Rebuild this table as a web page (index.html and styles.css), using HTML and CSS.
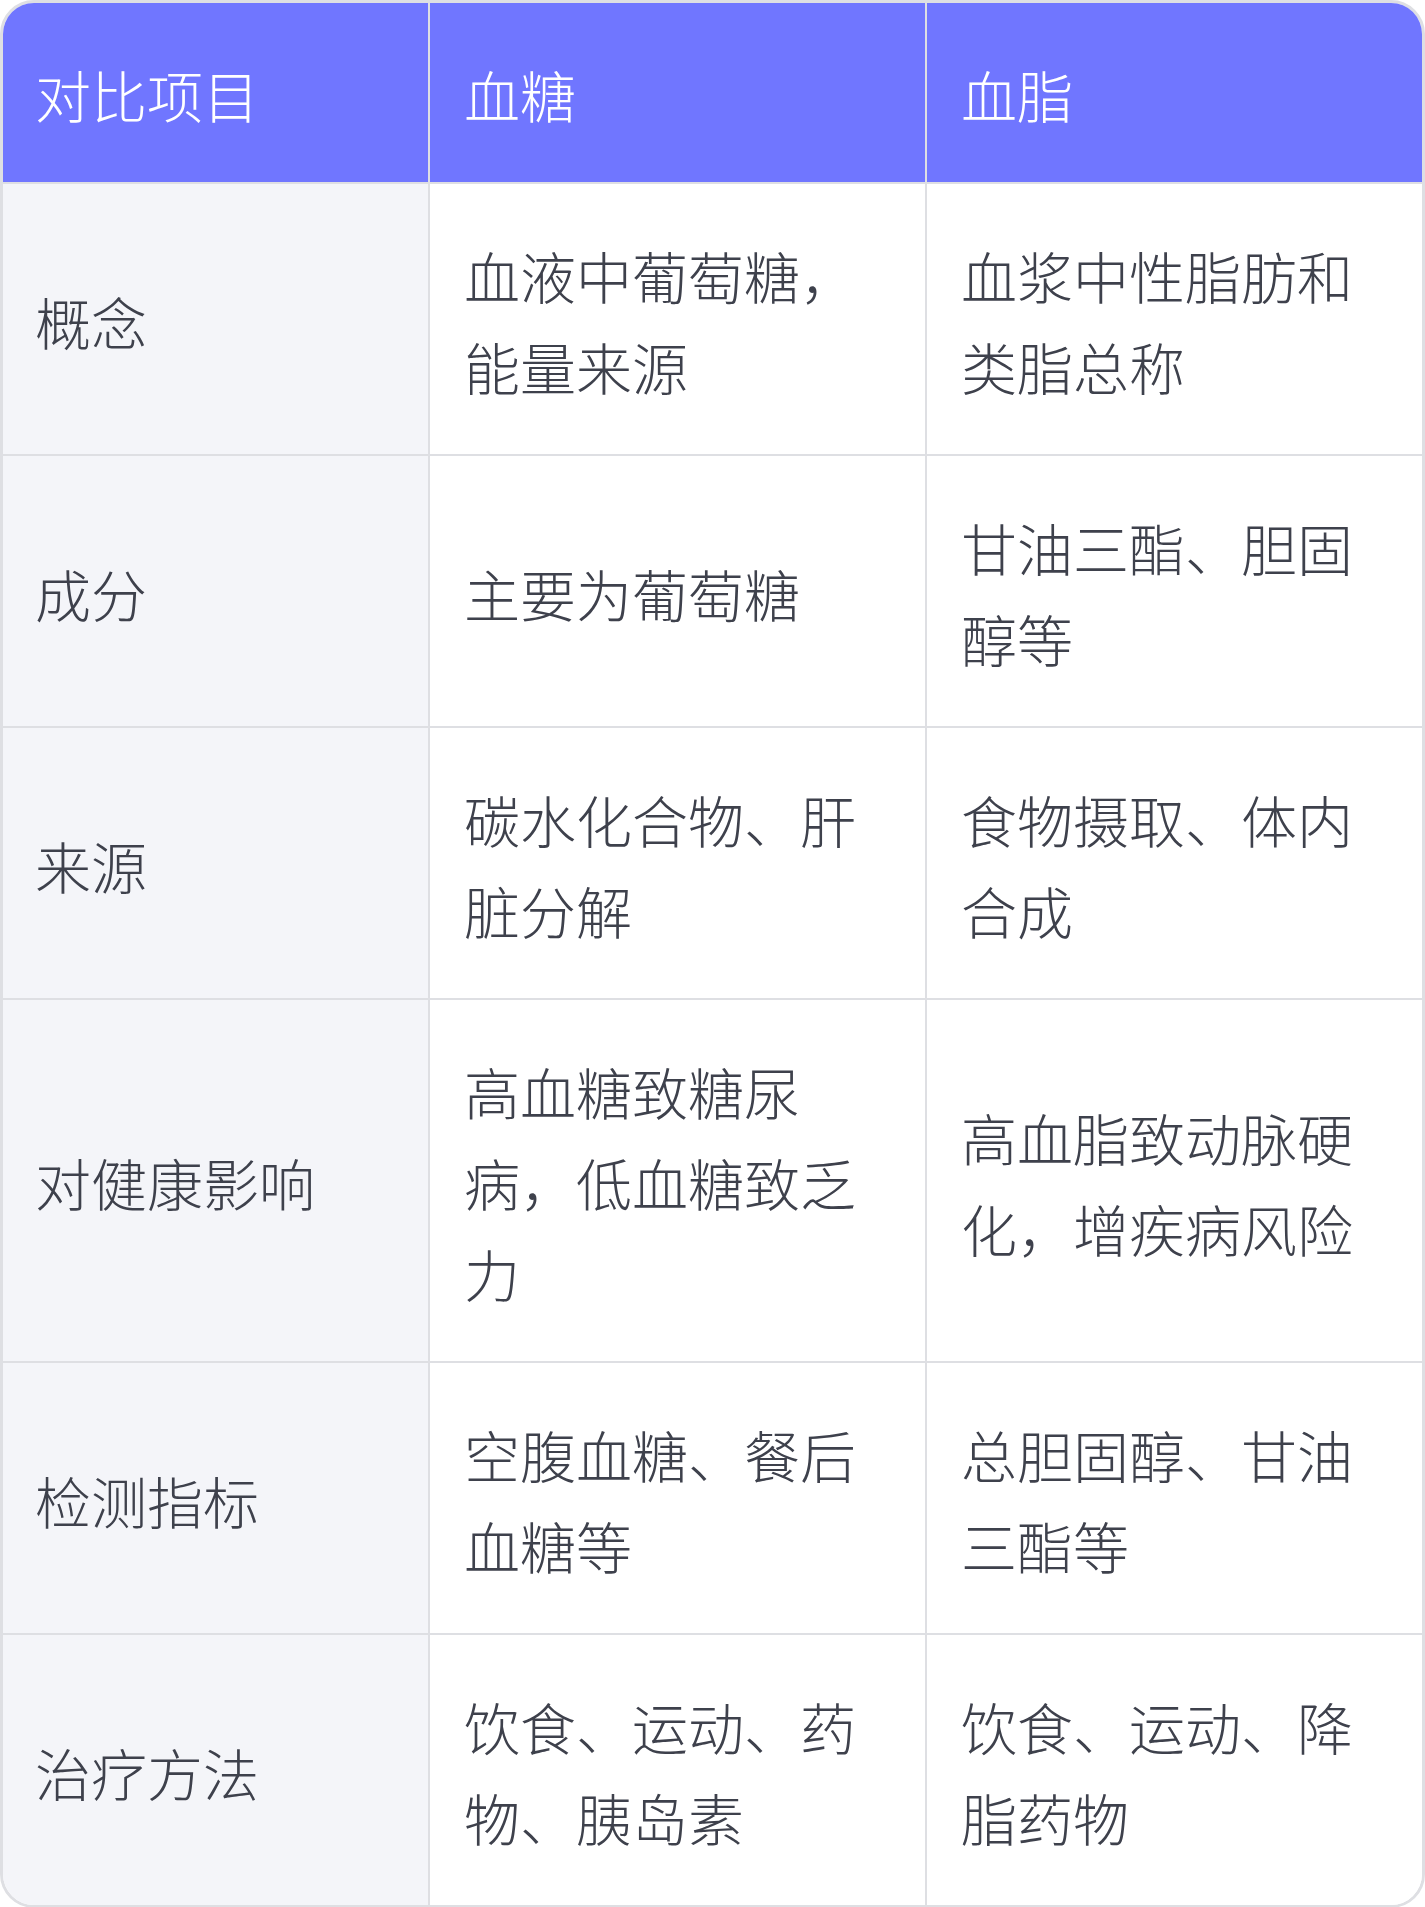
FILE: index.html
```html
<!DOCTYPE html>
<html lang="zh-CN">
<head>
<meta charset="utf-8">
<link rel="stylesheet" href="styles.css">
</head>
<body>
<div class="wrap">
<table class="cmp">
<colgroup><col class="c1"><col class="c2"><col class="c3"></colgroup>
<thead>
<tr><th>对比项目</th><th>血糖</th><th>血脂</th></tr>
</thead>
<tbody>
<tr><td>概念</td><td>血液中葡萄糖，能量来源</td><td>血浆中性脂肪和类脂总称</td></tr>
<tr><td>成分</td><td>主要为葡萄糖</td><td>甘油三酯、胆固醇等</td></tr>
<tr><td>来源</td><td>碳水化合物、肝脏分解</td><td>食物摄取、体内合成</td></tr>
<tr><td>对健康影响</td><td>高血糖致糖尿病，低血糖致乏力</td><td>高血脂致动脉硬化，增疾病风险</td></tr>
<tr><td>检测指标</td><td>空腹血糖、餐后血糖等</td><td>总胆固醇、甘油三酯等</td></tr>
<tr><td>治疗方法</td><td>饮食、运动、药物、胰岛素</td><td>饮食、运动、降脂药物</td></tr>
</tbody>
</table>
</div>
</body>
</html>
```
FILE: styles.css
```css
html, body {
  margin: 0;
  padding: 0;
  background: #ffffff;
}
.wrap {
  width: 1425px;
  box-sizing: border-box;
  border: 3px solid #dedfe3;
  border-radius: 34px;
  overflow: hidden;
}
.cmp {
  width: 100%;
  border-collapse: separate;
  border-spacing: 0;
  table-layout: fixed;
  font-family: "Noto Sans CJK SC", "Noto Sans", sans-serif;
  font-size: 56px;
  font-weight: 300;
  line-height: 91px;
  color: #3e414c;
}
.c1 { width: 427px; }
.c2 { width: 497px; }
.c3 { width: auto; }
.cmp th, .cmp td {
  padding: 45px 34px 43px;
  text-align: left;
  vertical-align: middle;
  border-right: 2px solid #dedfe3;
  border-bottom: 2px solid #dedfe3;
  font-weight: 300;
}
.cmp th:first-child, .cmp td:first-child {
  padding-left: 32px;
}
.cmp th:last-child, .cmp td:last-child {
  border-right: none;
}
.cmp tbody tr:last-child td {
  border-bottom: none;
}
.cmp th {
  background: #7076ff;
  color: #ffffff;
}
.cmp td:first-child {
  background: #f4f5f9;
}
.cmp td {
  background: #ffffff;
}
```
